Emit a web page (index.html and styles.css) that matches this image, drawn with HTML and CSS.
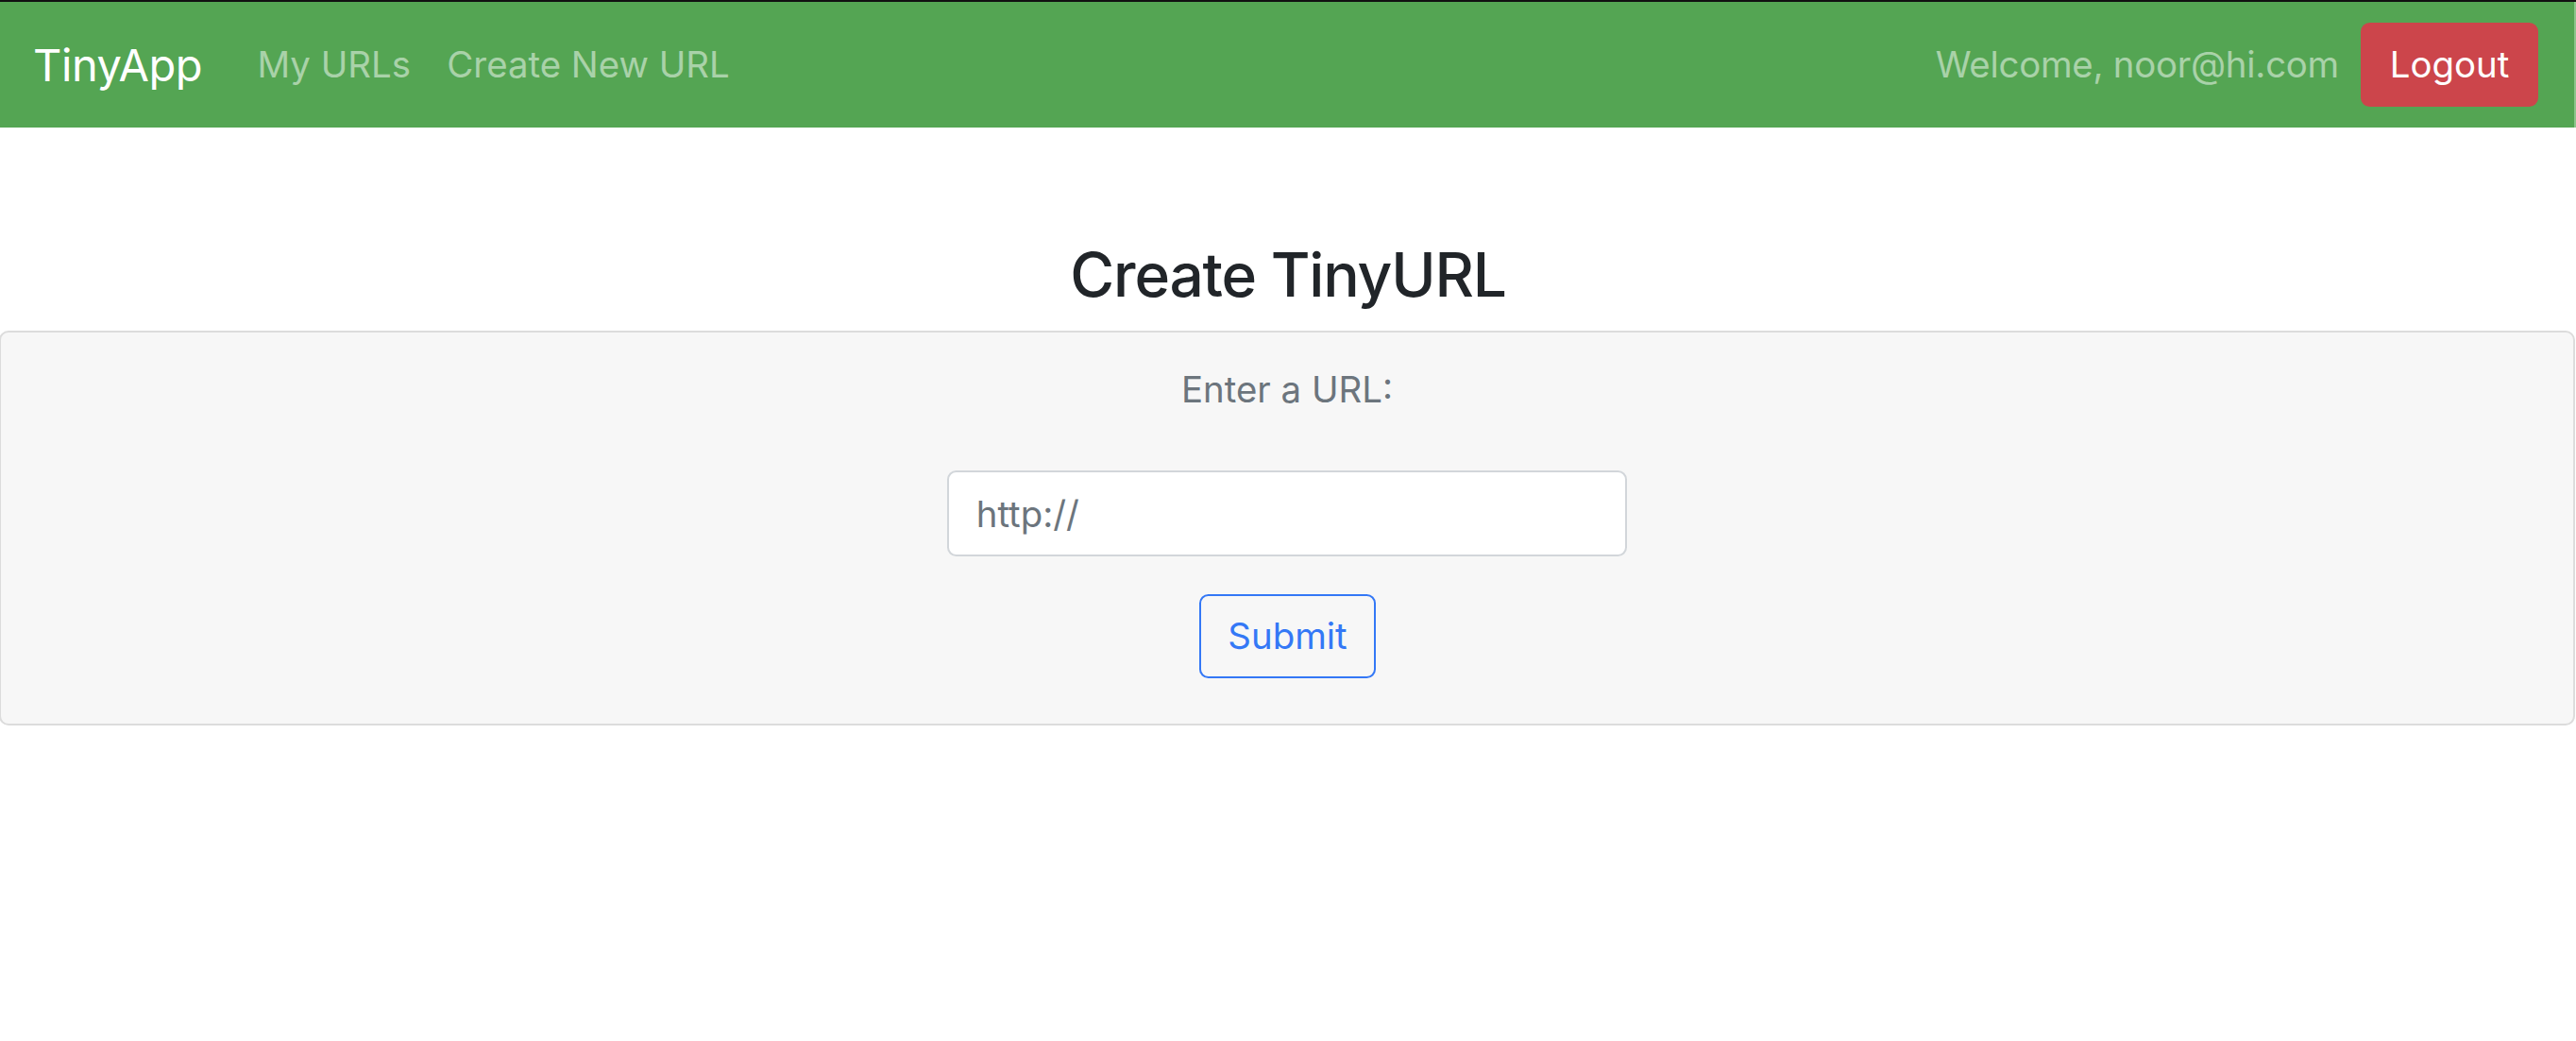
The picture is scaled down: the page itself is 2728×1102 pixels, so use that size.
FILE: index.html
```html
<!DOCTYPE html>
<html lang="en">
<head>
<meta charset="utf-8">
<title>TinyApp</title>
<link rel="stylesheet" href="styles.css">
</head>
<body>
  <nav class="navbar">
    <a class="brand" href="#">TinyApp</a>
    <div class="nav-links">
      <a class="nav-link" href="#">My URLs</a>
      <a class="nav-link" href="#">Create New URL</a>
    </div>
    <div class="nav-right">
      <span class="welcome">Welcome, noor@hi.com</span>
      <button class="btn btn-danger" type="button">Logout</button>
    </div>
  </nav>
  <main class="main">
    <h3 class="title">Create TinyURL</h3>
    <div class="card">
      <form class="card-body">
        <label class="label" for="longURL">Enter a URL:</label>
        <input class="form-control" id="longURL" type="text" placeholder="http://">
        <button class="btn btn-outline-primary" type="submit">Submit</button>
      </form>
    </div>
  </main>
</body>
</html>
```
FILE: styles.css
```css
* { box-sizing: border-box; }
html, body { margin: 0; padding: 0; }
body {
  font-family: "Inter", "Noto Sans", sans-serif;
  font-size: 38.4px;
  line-height: 1.5;
  color: #212529;
  background: #fff;
  border-top: 2px solid #111;
}
a { text-decoration: none; }

.navbar {
  display: flex;
  align-items: center;
  height: 133px;
  padding: 0 38px 0 35px;
  background: #54a553;
  border-right: 2px solid #8cc58b;
}
.brand {
  font-size: 47px;
  letter-spacing: -0.4px;
  line-height: 72px;
  color: #fff;
  margin-right: 39px;
}
.nav-links { display: flex; flex: 1; }
.nav-link {
  color: rgba(255,255,255,.5);
  padding: 0 19.2px;
  line-height: 57.6px;
}
.nav-right { display: flex; align-items: center; }
.welcome {
  color: rgba(255,255,255,.5);
  letter-spacing: -0.25px;
  margin-right: 23px;
}
.btn {
  font-family: inherit;
  font-size: 38.4px;
  line-height: 57.6px;
  padding: 14.4px 28.8px;
  border-radius: 9.6px;
  border: 2.4px solid transparent;
  cursor: pointer;
}
.btn-danger {
  background: #cc454b;
  border-color: #cc454b;
  color: #fff;
  height: 89px;
  width: 188px;
  padding-top: 0;
  padding-bottom: 0;
}
.main {
  text-align: center;
}
.title {
  font-size: 64px;
  letter-spacing: -1.2px;
  font-weight: 500;
  line-height: 1.2;
  margin: 118px 0 20px;
  color: #212529;
}
.card {
  background: #f7f7f7;
  border: 2px solid #dcdcdc;
  border-radius: 10px;
  margin: 0 1px 0 -1px;
}
.card-body {
  display: flex;
  flex-direction: column;
  align-items: center;
  padding: 32px 48px 48px;
  margin: 0;
}
.label {
  color: #6c757d;
  line-height: 57.6px;
  margin-bottom: 57px;
}
.form-control {
  width: 720px;
  height: 91px;
  font-family: inherit;
  font-size: 38.4px;
  padding: 0 28.8px;
  border: 2.4px solid #d2d6da;
  border-radius: 9.6px;
  background: #fff;
  color: #495057;
  margin: 0 0 40px;
}
.form-control::placeholder { color: #6c757d; opacity: 1; }
.btn-outline-primary {
  background: transparent;
  border-color: #3478f6;
  color: #3478f6;
  width: 187px;
  height: 89px;
  padding-top: 0;
  padding-bottom: 0;
}
```
